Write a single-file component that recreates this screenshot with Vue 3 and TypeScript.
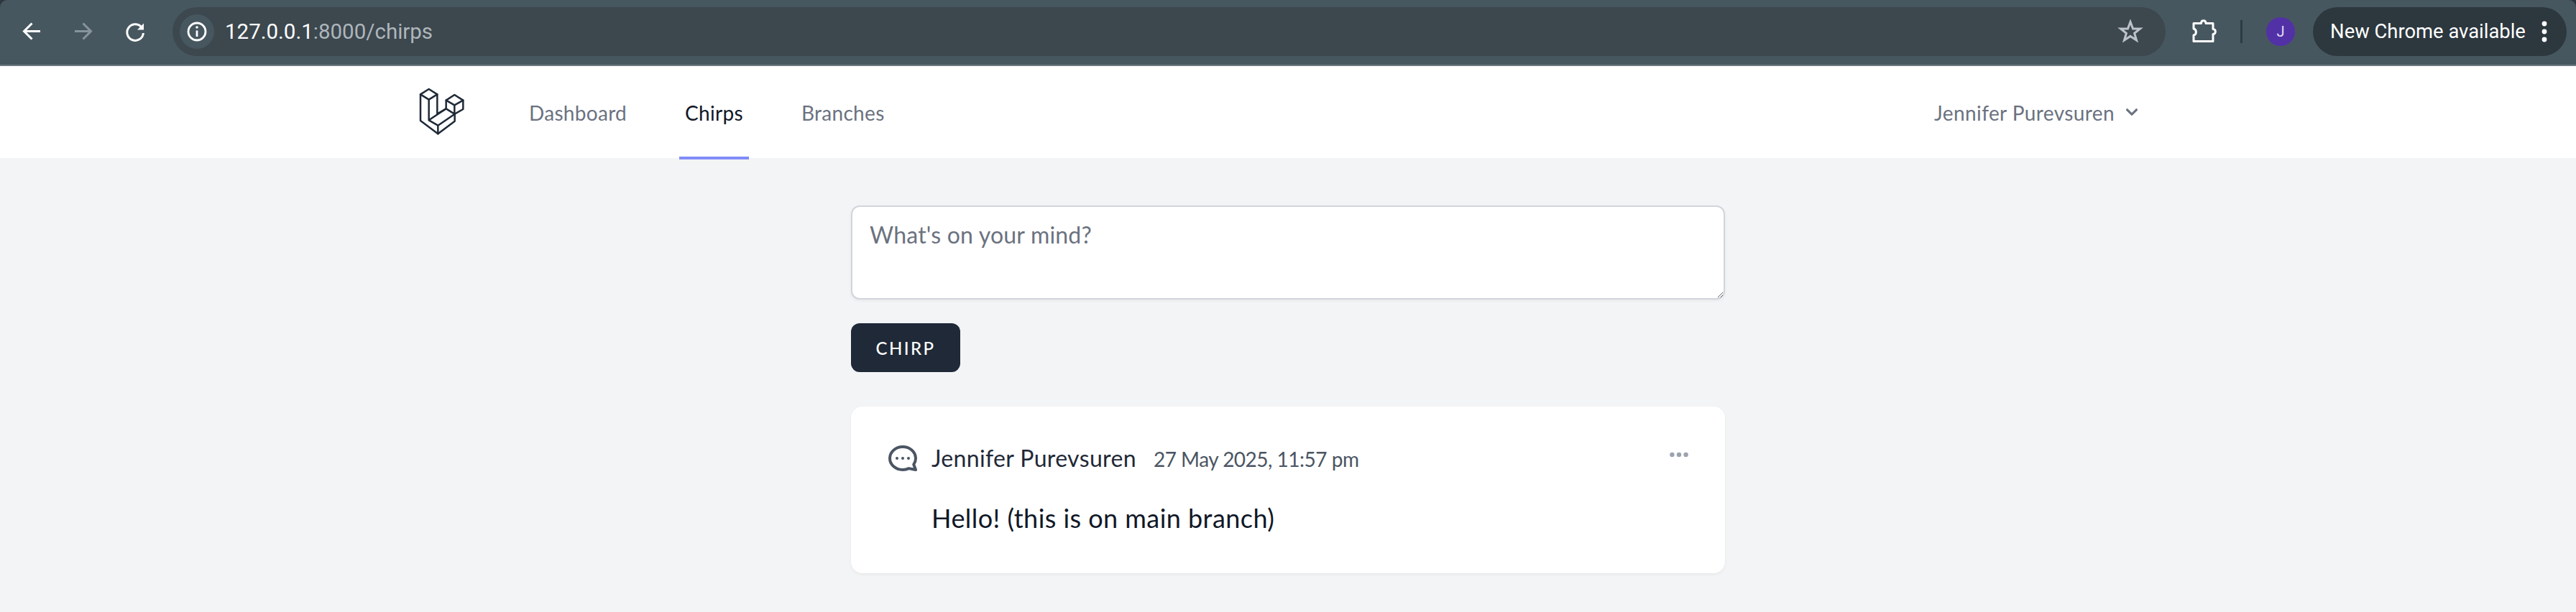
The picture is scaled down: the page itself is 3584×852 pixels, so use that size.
<script setup lang="ts">
const navLinks = [
  { label: 'Dashboard', active: false },
  { label: 'Chirps', active: true },
  { label: 'Branches', active: false },
]
</script>

<template>
  <div class="window">
    <header class="chrome">
      <div class="toolbar">
        <span class="tool-btn">
          <svg viewBox="0 0 48 48" width="48" height="48" fill="none" stroke="#fff" stroke-width="3">
            <path d="M36 23.5H14M24.5 12.5L13.5 23.5L24.5 34.5" />
          </svg>
        </span>
        <span class="tool-btn">
          <svg viewBox="0 0 48 48" width="48" height="48" fill="none" stroke="#87949b" stroke-width="3">
            <path d="M12 23.5H34M23.5 12.5L34.5 23.5L23.5 34.5" />
          </svg>
        </span>
        <span class="tool-btn">
          <svg viewBox="0 0 48 48" width="48" height="48" fill="none" stroke="#fff" stroke-width="3">
            <path d="M32.5 17.5A11.3 11.3 0 1 0 35.4 26" />
            <path d="M36 12.5V21.5H27Z" fill="#fff" stroke="none" />
          </svg>
        </span>
        <div class="omnibox">
          <span class="site-chip">
            <svg viewBox="0 0 32 32" width="32" height="32" fill="none" stroke="#fff" stroke-width="2.8">
              <circle cx="16" cy="16" r="12" />
              <path d="M16 14.5V23" />
              <circle cx="16" cy="10" r="1.8" fill="#fff" stroke="none" />
            </svg>
          </span>
          <span class="url"><span class="url-host">127.0.0.1</span>:8000/chirps</span>
          <svg class="star" viewBox="0 0 36 36" width="36" height="36" fill="none" stroke="#bcc3c8" stroke-width="3" stroke-linejoin="miter">
            <path d="M18 4.5L21.6 14H31.5L23.6 20.3L26.5 30L18 24.4L9.5 30L12.4 20.3L4.5 14H14.4Z" />
          </svg>
        </div>
        <svg class="puzzle" viewBox="0 0 36 36" width="36" height="36" fill="none" stroke="#fff" stroke-width="3" stroke-linejoin="round">
          <path d="M4 6.5H14.5C14.5 1.5 21 1.5 21 6.5H31V14.5C35.5 14.5 35.5 21.5 31 21.5V31.5H4V23C8.5 22 8.5 15 4 14Z" />
        </svg>
        <span class="divider"></span>
        <span class="avatar">J</span>
        <div class="update-pill">
          <span>New Chrome available</span>
          <svg viewBox="0 0 8 36" width="8" height="36" fill="#fff">
            <circle cx="4" cy="7" r="3.4" />
            <circle cx="4" cy="18" r="3.4" />
            <circle cx="4" cy="29" r="3.4" />
          </svg>
        </div>
      </div>
    </header>

    <nav class="nav">
      <div class="nav-inner">
        <div class="nav-left">
          <svg class="logo" viewBox="3 0 240 228" width="80" height="76" fill="none" stroke="#1f2937" stroke-width="7.5" stroke-linejoin="round" stroke-linecap="round">
            <path d="M65 18L30 40V150L103 205L173 152V122L208 102V65L172 42L137 65V100L100 122V40Z" />
            <path d="M30 40L65 62L100 40M65 62V148L103 170V205M103 170L173 122M65 148L137 100L172 122V85L137 65M172 85L208 65" />
          </svg>
          <div class="nav-links">
            <a v-for="link in navLinks" :key="link.label" class="nav-link" :class="{ active: link.active }">{{ link.label }}</a>
          </div>
        </div>
        <button class="user-btn">
          Jennifer Purevsuren
          <svg viewBox="0 0 20 20" width="32" height="32" fill="currentColor">
            <path fill-rule="evenodd" clip-rule="evenodd" d="M5.293 7.293a1 1 0 011.414 0L10 10.586l3.293-3.293a1 1 0 111.414 1.414l-4 4a1 1 0 01-1.414 0l-4-4a1 1 0 010-1.414z" />
          </svg>
        </button>
      </div>
    </nav>

    <main class="content">
      <textarea class="composer" placeholder="What's on your mind?"></textarea>
      <button class="chirp-btn">CHIRP</button>

      <article class="chirp">
        <svg class="chirp-icon" viewBox="0 0 24 24" width="48" height="48" fill="none" stroke="#4b5563" stroke-width="2" stroke-linecap="round" stroke-linejoin="round">
          <path d="M8 12h.01M12 12h.01M16 12h.01M21 12c0 4.418-4.03 8-9 8a9.863 9.863 0 01-4.255-.949L3 20l1.395-3.72C3.512 15.042 3 13.574 3 12c0-4.418 4.03-8 9-8s9 3.582 9 8z" />
        </svg>
        <div class="chirp-body">
          <div class="chirp-head">
            <div class="chirp-meta">
              <span class="chirp-author">Jennifer Purevsuren</span>
              <small class="chirp-date">27 May 2025, 11:57 pm</small>
            </div>
            <svg class="more" viewBox="0 0 20 20" width="32" height="32" fill="#9ca3af">
              <path d="M6 10a2 2 0 11-4 0 2 2 0 014 0zM12 10a2 2 0 11-4 0 2 2 0 014 0zM16 12a2 2 0 100-4 2 2 0 000 4z" />
            </svg>
          </div>
          <p class="chirp-message">Hello! (this is on main branch)</p>
        </div>
      </article>
    </main>
  </div>
</template>

<style>
html,
body {
  margin: 0;
  background: #f3f4f6;
  overflow: hidden;
}
</style>

<style scoped>
.window {
  height: 852px;
  font-family: Lato, "Liberation Sans", sans-serif;
  background: #f3f4f6;
}

.chrome {
  background: #2c373e;
}

.toolbar {
  height: 88px;
  display: flex;
  align-items: center;
  padding: 0 13px 2px 20px;
  background: #47575f;
  border-bottom: 2px solid #6d7a80;
  border-radius: 10px 10px 0 0;
  font-family: Roboto, sans-serif;
  color: #fff;
}

.tool-btn {
  width: 48px;
  height: 48px;
  margin-right: 24px;
  display: flex;
}

.omnibox {
  width: 2774px;
  height: 68px;
  margin-left: 4px;
  padding: 0 31px 0 10px;
  box-sizing: border-box;
  display: flex;
  align-items: center;
  background: #3c474e;
  border-radius: 34px;
}

.site-chip {
  width: 48px;
  height: 48px;
  display: flex;
  align-items: center;
  justify-content: center;
  border-radius: 50%;
  background: #47575f;
}

.url {
  margin-left: 15px;
  font-size: 29.5px;
  color: #aeb6bb;
}

.url-host {
  color: #fff;
}

.star {
  margin-left: auto;
}

.puzzle {
  margin-left: 35px;
}

.divider {
  width: 3px;
  height: 32px;
  margin-left: 33px;
  background: #2c3c46;
}

.avatar {
  width: 40px;
  height: 40px;
  margin-left: 33px;
  display: flex;
  align-items: center;
  justify-content: center;
  border-radius: 50%;
  background: #5231a7;
  color: #e6dcf6;
  font-size: 20px;
}

.update-pill {
  width: 353px;
  height: 68px;
  margin-left: 25px;
  padding: 0 27px 0 24px;
  box-sizing: border-box;
  display: flex;
  align-items: center;
  justify-content: space-between;
  background: #2c373e;
  border-radius: 34px;
  font-size: 27.4px;
}

.nav {
  height: 128px;
  background: #fff;
}

.nav-inner {
  max-width: 2432px;
  height: 128px;
  margin: 0 auto;
  display: flex;
  justify-content: space-between;
}

.nav-left {
  display: flex;
  align-items: center;
}

.logo {
  flex-shrink: 0;
}

.nav-links {
  display: flex;
  align-self: stretch;
  gap: 65px;
  margin-left: 72px;
}

.nav-link {
  height: 130px;
  padding: 4px 8px 0;
  box-sizing: border-box;
  display: flex;
  align-items: center;
  font-size: 28px;
  letter-spacing: 0.3px;
  color: #6b7280;
  border-bottom: 4px solid transparent;
}

.nav-link.active {
  color: #111827;
  border-bottom-color: #818cf8;
}

.user-btn {
  align-self: center;
  display: flex;
  align-items: center;
  gap: 8px;
  padding: 2px 0 0;
  margin-right: 26px;
  border: 0;
  background: none;
  font: inherit;
  font-size: 28px;
  letter-spacing: 0.4px;
  color: #6b7280;
}

.user-btn svg {
  margin-top: -2px;
}

.content {
  width: 1216px;
  margin: 0 auto;
  padding-top: 66px;
}

.composer {
  display: block;
  width: 100%;
  height: 131px;
  padding: 19px 24px;
  box-sizing: border-box;
  border: 2px solid #d1d5db;
  border-radius: 12px;
  background: #fff;
  box-shadow: 0 2px 4px rgba(0, 0, 0, 0.05);
  font: inherit;
  font-size: 32px;
  letter-spacing: 0.2px;
  outline: none;
}

.composer::placeholder {
  color: #6b7280;
  opacity: 1;
}

.chirp-btn {
  display: block;
  width: 152px;
  height: 68px;
  margin-top: 33px;
  padding: 0;
  border: 0;
  border-radius: 12px;
  background: #1f2937;
  color: #fff;
  font: inherit;
  font-size: 24px;
  font-weight: 500;
  letter-spacing: 2.4px;
}

.chirp {
  display: flex;
  gap: 16px;
  height: 232px;
  margin-top: 48px;
  padding: 48px;
  box-sizing: border-box;
  border-radius: 16px;
  background: #fff;
  box-shadow: 0 2px 4px rgba(0, 0, 0, 0.05);
}

.chirp-icon {
  flex-shrink: 0;
  transform: scaleX(-1);
}

.chirp-body {
  flex: 1;
}

.chirp-head {
  display: flex;
  justify-content: space-between;
  align-items: flex-start;
}

.chirp-meta {
  padding-top: 4px;
}

.more {
  margin-top: 3px;
}

.chirp-author {
  font-size: 32px;
  letter-spacing: 0.36px;
  color: #1f2937;
}

.chirp-date {
  margin-left: 24px;
  font-size: 28px;
  letter-spacing: -0.5px;
  color: #4b5563;
}

.chirp-message {
  margin: 42px 0 0;
  font-size: 36px;
  letter-spacing: 0.45px;
  color: #111827;
}
</style>
